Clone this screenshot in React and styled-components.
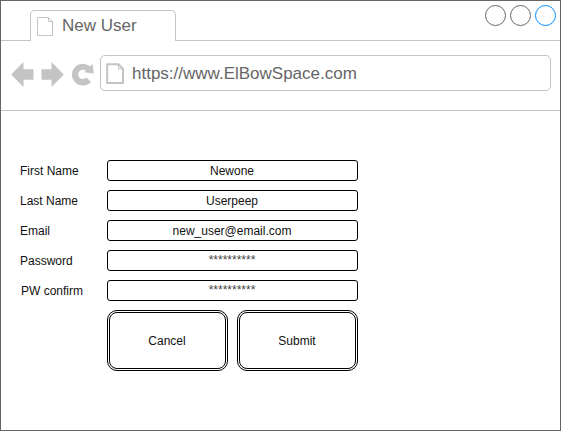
import React from "react";
import styled, { createGlobalStyle } from "styled-components";

const GlobalStyle = createGlobalStyle`
  *, *::before, *::after { box-sizing: border-box; }
  body { margin: 0; background: #fff; overflow: hidden; }
`;

const Window = styled.main`
  width: 561px;
  height: 431px;
  border: 1px solid #666;
  background: #fff;
  font-family: "Liberation Sans", Arial, sans-serif;
  display: flex;
  flex-direction: column;
`;

const TabBar = styled.header`
  height: 40px;
  flex: none;
  display: flex;
  align-items: flex-end;
`;

const TabRule = styled.div`
  width: ${(p) => p.$width || "auto"};
  flex: ${(p) => (p.$width ? "none" : "1")};
  height: 40px;
  border-bottom: 1px solid #c4c4c4;
  display: flex;
  justify-content: flex-end;
`;

const Tab = styled.div`
  width: 146px;
  height: 31px;
  border: 1px solid #c4c4c4;
  border-bottom: none;
  border-radius: 5px 5px 0 0;
  display: flex;
  align-items: flex-start;
  padding: 6px 0 0 6px;
`;

const TabTitle = styled.h1`
  margin: -1px 0 0 9px;
  font-size: 17px;
  line-height: 20px;
  font-weight: 400;
  color: #666;
  white-space: nowrap;
`;

const WindowControls = styled.div`
  display: flex;
  gap: 4px;
  padding: 4px 4px 0 0;
`;

const Control = styled.svg`
  display: block;
  width: 21px;
  height: 21px;
  fill: none;
  stroke: ${(p) => p.$color || "#666"};
`;

const Toolbar = styled.nav`
  height: 70px;
  flex: none;
  border-bottom: 1px solid #c4c4c4;
  display: flex;
  padding: 14px 9px 0 9px;
`;

const NavIcons = styled.svg`
  display: block;
  width: 90px;
  height: 36px;
  flex: none;
  fill: #c4c4c4;
`;

const AddressBar = styled.div`
  flex: 1;
  height: 36px;
  border: 1px solid #c4c4c4;
  border-radius: 5px;
  display: flex;
  padding: 7px 0 0 5px;
`;

const Address = styled.span`
  margin: 1px 0 0 7px;
  font-size: 17px;
  line-height: 20px;
  color: #666;
`;

const PageIcon = styled.svg`
  display: block;
  flex: none;
  fill: none;
  stroke: #c4c4c4;
`;

const Form = styled.form`
  width: 338px;
  margin: 49px 0 0 19px;
  display: flex;
  flex-direction: column;
  gap: 9px;
`;

const Field = styled.div`
  display: grid;
  grid-template-columns: 87px 251px;
  height: 21px;
`;

const Label = styled.label`
  font-size: 12px;
  line-height: 21px;
  padding-top: 1px;
  padding-left: ${(p) => (p.$inset ? 1 : 0)}px;
  color: #111;
  white-space: nowrap;
`;

const Input = styled.input`
  width: 251px;
  height: 21px;
  margin: 0;
  padding: 0 1px ${(p) => (p.$masked ? 2 : 0)}px 0;
  border: 1px solid #000;
  border-radius: 3px;
  background: #fff;
  color: ${(p) => (p.$masked ? "#444" : "#111")};
  font: 12px "Liberation Sans", Arial, sans-serif;
  text-align: center;
  outline: none;
`;

const Actions = styled.div`
  display: flex;
  gap: 9px;
  padding-left: 87px;
`;

const Button = styled.button`
  width: 121px;
  height: 61px;
  flex: none;
  padding: 0 1px 0 0;
  border: 3px double #000;
  border-radius: 10px;
  background: #fff;
  color: #111;
  font: 12px "Liberation Sans", Arial, sans-serif;
`;

const fields = [
  { id: "first", label: "First Name", value: "Newone" },
  { id: "last", label: "Last Name", value: "Userpeep" },
  { id: "email", label: "Email", value: "new_user@email.com" },
  { id: "password", label: "Password", value: "**********", masked: true },
  { id: "confirm", label: "PW confirm", value: "**********", masked: true, inset: true },
];

function WindowControl({ color }) {
  return (
    <Control $color={color} viewBox="0 0 21 21">
      <circle cx="10.5" cy="10.5" r="10" />
    </Control>
  );
}

export default function App() {
  return (
    <>
      <GlobalStyle />
      <Window>
        <TabBar>
          <TabRule $width="29px" />
          <Tab>
            <PageIcon width="16" height="19" viewBox="0 0 16 19">
              <path d="M.5.5H11.5L15.5 4.5V18.5H.5ZM11.5.5V4.5H15.5" />
            </PageIcon>
            <TabTitle>New User</TabTitle>
          </Tab>
          <TabRule>
            <WindowControls>
              <WindowControl />
              <WindowControl />
              <WindowControl color="#008cff" />
            </WindowControls>
          </TabRule>
        </TabBar>
        <Toolbar>
          <NavIcons viewBox="10 55 90 36">
            <path d="M11.2 74.5 23.5 62V69.3H33.5V79.7H23.5V87Z" />
            <path d="M63.8 74.5 51.5 62V69.3H41.5V79.7H51.5V87Z" />
            <path d="M93.8 73.5 84 72.2 86 70.8A4.7 4.7 0 1 0 86.4 77.6L91 81.9A10.9 10.9 0 1 1 89.8 66.3L92.6 64.2Z" />
          </NavIcons>
          <AddressBar>
            <PageIcon width="19" height="22" viewBox="0 0 19 22" strokeWidth="2">
              <path d="M1.2 1.2H12.5L17 5.7V20H1.2Z" />
              <path d="M12.5 1.5V6H17" strokeWidth="1" />
            </PageIcon>
            <Address>https://www.ElBowSpace.com</Address>
          </AddressBar>
        </Toolbar>
        <Form>
          {fields.map((f) => (
            <Field key={f.id}>
              <Label htmlFor={f.id} $inset={f.inset}>{f.label}</Label>
              <Input id={f.id} defaultValue={f.value} $masked={f.masked} />
            </Field>
          ))}
          <Actions>
            <Button type="button">Cancel</Button>
            <Button type="button">Submit</Button>
          </Actions>
        </Form>
      </Window>
    </>
  );
}
